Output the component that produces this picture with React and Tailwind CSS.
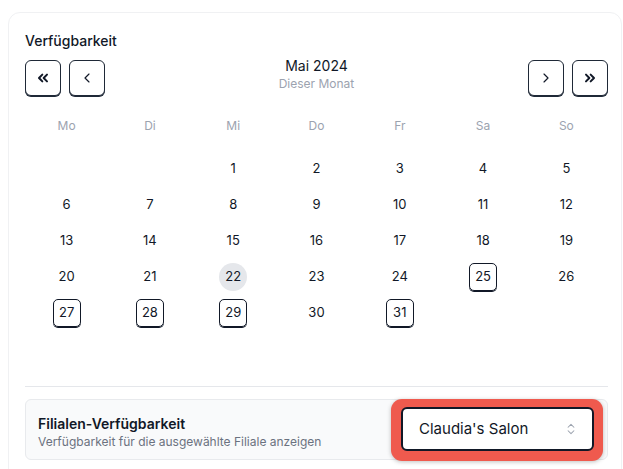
import { ChevronLeft, ChevronRight, ChevronsLeft, ChevronsRight, ChevronsUpDown } from 'lucide-react'

const WEEKDAYS = ['Mo', 'Di', 'Mi', 'Do', 'Fr', 'Sa', 'So']
const BOXED = [25, 27, 28, 29, 31]
const TODAY = 22

function NavButton({ children, label }) {
  return (
    <button
      aria-label={label}
      className="w-9 h-9 flex items-center justify-center rounded-md border-[1.5px] border-[#1f2937] bg-white text-[#111827] shadow-[0_1px_0_#1f2937]"
    >
      {children}
    </button>
  )
}

function DayCell({ day }) {
  if (!day) return <div className="h-9" />
  let cls = 'w-7 h-7 flex items-center justify-center text-[13px] text-[#111827]'
  if (day === TODAY) cls += ' rounded-full bg-[#e5e7eb]'
  else if (BOXED.includes(day)) cls += ' rounded-[5px] border border-[#111827] shadow-[0_1px_0_#111827]'
  return (
    <div className="h-9 flex items-center justify-center">
      <div className={cls}>{day}</div>
    </div>
  )
}

export default function App() {
  // May 2024 starts on a Wednesday
  const cells = [null, null, ...Array.from({ length: 31 }, (_, i) => i + 1)]
  while (cells.length < 42) cells.push(null)

  return (
    <div className="min-h-[469px] bg-white pt-3 pl-2 pr-[1px] overflow-hidden" style={{ fontFamily: 'Inter, "Noto Sans", sans-serif' }}>
      <div className="rounded-xl border border-[#f0f1f3] bg-white pl-4 pr-[13px] pt-[18px] pb-4 min-h-[470px]">
        <h2 className="text-[14px] leading-5 font-medium text-[#111827]">Verfügbarkeit</h2>

        <div className="mt-[9px] flex items-center justify-between">
          <div className="flex gap-2">
            <NavButton label="Vorheriges Jahr"><ChevronsLeft size={16} strokeWidth={3} /></NavButton>
            <NavButton label="Vorheriger Monat"><ChevronLeft size={16} strokeWidth={1.75} /></NavButton>
          </div>
          <div className="flex flex-col items-center -mt-[8px]">
            <span className="text-[14px] leading-5 text-[#111827]">Mai 2024</span>
            <span className="text-[12px] leading-4 text-[#9ca3af]">Dieser Monat</span>
          </div>
          <div className="flex gap-2">
            <NavButton label="Nächster Monat"><ChevronRight size={16} strokeWidth={1.75} /></NavButton>
            <NavButton label="Nächstes Jahr"><ChevronsRight size={16} strokeWidth={3} /></NavButton>
          </div>
        </div>

        <div className="grid grid-cols-7 mt-[20px]">
          {WEEKDAYS.map(d => (
            <div key={d} className="h-5 flex items-center justify-center text-[12px] text-[#9ca3af]">{d}</div>
          ))}
        </div>

        <div className="grid grid-cols-7 mt-[15px]">
          {cells.map((d, i) => <DayCell key={i} day={d} />)}
        </div>

        <div className="mt-[19px] h-px bg-[#e5e7eb]" />

        <div className="mt-3 rounded-md border border-[#e8eaed] bg-[#f9fafb] pl-3 pr-1 flex items-center justify-between h-[61px]">
          <div className="pt-[4px]">
            <p className="text-[14px] leading-5 font-semibold text-[#111827]">Filialen-Verfügbarkeit</p>
            <p className="text-[12px] leading-4 text-[#6b7280]">Verfügbarkeit für die ausgewählte Filiale anzeigen</p>
          </div>
          <div className="rounded-[11px] bg-[#ef5a4e] pl-[10px] pr-[9px] pt-[8px] pb-[10px] shadow-[0_1px_4px_rgba(0,0,0,0.25)] mt-[1px]">
            <div className="w-[193px] h-[44px] rounded-md border-2 border-[#111827] bg-white flex items-center justify-between pl-[16px] pr-[14px]">
              <span className="text-[15px] text-[#111827]">Claudia's Salon</span>
              <ChevronsUpDown size={14} strokeWidth={1.75} className="text-[#9ca3af]" />
            </div>
          </div>
        </div>
      </div>
    </div>
  )
}
